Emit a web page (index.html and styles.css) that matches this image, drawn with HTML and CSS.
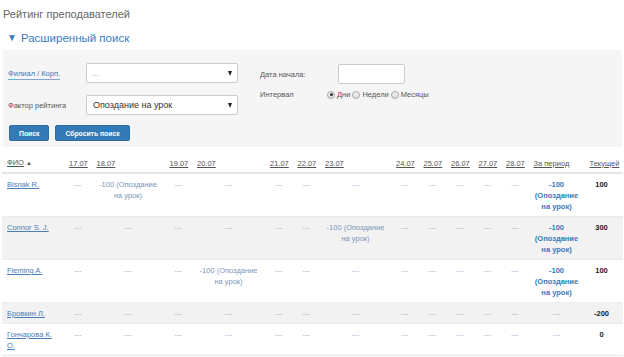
FILE: index.html
```html
<!DOCTYPE html>
<html lang="ru">
<head>
    <meta charset="UTF-8">
    <title>Рейтинг преподавателей</title>
    <link rel="stylesheet" href="styles.css">
</head>
<body>
    <div class="page">
        <h1 class="page-title">Рейтинг преподавателей</h1>
        <div class="search-toggle"><span class="caret">▼</span>Расширенный поиск</div>

        <div class="search-panel">
            <div class="search-fields">
                <div class="field-col">
                    <div class="field-row">
                        <span class="field-label"><a class="link-label">Филиал / Корп.</a></span>
                        <div class="fake-select"><span class="placeholder">...</span><span class="arrow"></span></div>
                    </div>
                    <div class="field-row">
                        <span class="field-label">Фактор рейтинга</span>
                        <div class="fake-select"><span class="value">Опоздание на урок</span><span class="arrow"></span></div>
                    </div>
                </div>
                <div class="field-col right">
                    <div class="field-row date-row">
                        <span class="field-label">Дата начала:</span>
                        <div class="date-input"></div>
                    </div>
                    <div class="field-row interval-row">
                        <span class="field-label">Интервал</span>
                        <label class="radio"><span class="radio-dot checked"></span>Дни</label>
                        <label class="radio"><span class="radio-dot"></span>Недели</label>
                        <label class="radio"><span class="radio-dot"></span>Месяцы</label>
                    </div>
                </div>
            </div>
            <div class="buttons">
                <button class="btn">Поиск</button>
                <button class="btn">Сбросить поиск</button>
            </div>
        </div>

        <table class="rating">
            <colgroup>
                <col class="c-name">
                <col class="c-day"><col class="c-wide"><col class="c-day"><col class="c-wide">
                <col class="c-day"><col class="c-day"><col class="c-wide2">
                <col class="c-day"><col class="c-day"><col class="c-day"><col class="c-day"><col class="c-day">
                <col class="c-period"><col class="c-current">
            </colgroup>
            <thead>
                <tr>
                    <th><a>ФИО</a> <span class="sort">▲</span></th>
                    <th><a>17.07</a></th>
                    <th><a>18.07</a></th>
                    <th><a>19.07</a></th>
                    <th><a>20.07</a></th>
                    <th><a>21.07</a></th>
                    <th><a>22.07</a></th>
                    <th><a>23.07</a></th>
                    <th><a>24.07</a></th>
                    <th><a>25.07</a></th>
                    <th><a>26.07</a></th>
                    <th><a>27.07</a></th>
                    <th><a>28.07</a></th>
                    <th><a>За период</a></th>
                    <th><a>Текущей</a></th>
                </tr>
            </thead>
            <tbody id="rows"></tbody>
        </table>
    </div>

    <script>
        const teachers = [
            { name: 'Bisnak R.', late: 1, total: '100', hasPeriod: true },
            { name: 'Connor S. J.', late: 6, total: '300', hasPeriod: true },
            { name: 'Fleming A.', late: 3, total: '100', hasPeriod: true },
            { name: 'Бровкин Л.', late: -1, total: '-200', hasPeriod: false },
            { name: 'Гончарова К. О.', late: -1, total: '0', hasPeriod: false }
        ];

        const tbody = document.getElementById('rows');

        teachers.forEach(t => {
            let html = '<td class="name"><a>' + t.name + '</a></td>';
            for (let i = 0; i < 12; i++) {
                if (i === t.late) {
                    html += '<td class="day"><a class="score">-100 (Опоздание на урок)</a></td>';
                } else {
                    html += '<td class="day"><a class="empty">---</a></td>';
                }
            }
            if (t.hasPeriod) {
                html += '<td class="period"><a>-100 (Опоздание на урок)</a></td>';
            } else {
                html += '<td class="period"><a class="empty">---</a></td>';
            }
            html += '<td class="current">' + t.total + '</td>';

            const tr = document.createElement('tr');
            tr.innerHTML = html;
            tbody.appendChild(tr);
        });
    </script>
</body>
</html>
```

FILE: styles.css
```css
* {
    margin: 0;
    padding: 0;
    box-sizing: border-box;
}

body {
    font-family: "Liberation Sans", Arial, sans-serif;
    background: white;
    color: #555;
}

.page {
    padding: 0 2px 0 3px;
}

.page-title {
    font-size: 11px;
    font-weight: normal;
    color: #666;
    line-height: 14px;
    margin-top: 7px;
}

.search-toggle {
    font-size: 11.5px;
    color: #3a7bbf;
    line-height: 15px;
    margin-top: 9px;
    padding-left: 4px;
}

.caret {
    font-size: 10px;
    margin-right: 4px;
    vertical-align: 1px;
}

.search-panel {
    background: #f5f5f5;
    margin-top: 4px;
    padding: 13px 0 6px 5px;
}

.search-fields {
    display: flex;
}

.field-col {
    display: flex;
    flex-direction: column;
    gap: 12px;
    width: 230px;
}

.field-col.right {
    margin-left: 22px;
    gap: 5px;
    padding-top: 1px;
}

.field-row {
    display: flex;
    align-items: center;
    height: 20px;
    font-size: 7.5px;
}

.field-label {
    width: 78px;
    flex-shrink: 0;
    color: #555;
}

.link-label {
    color: #337ab7;
    border-bottom: 1px solid #7da6d0;
    padding-bottom: 1px;
}

.fake-select {
    width: 152px;
    height: 20px;
    background: white;
    border: 1px solid #ccc;
    border-radius: 2px;
    display: flex;
    align-items: center;
    justify-content: space-between;
    padding: 0 5px;
}

.fake-select .placeholder {
    color: #999;
    font-size: 8px;
}

.fake-select .value {
    color: #333;
    font-size: 9px;
    padding-left: 1px;
}

.arrow {
    width: 0;
    height: 0;
    border-left: 2.5px solid transparent;
    border-right: 2.5px solid transparent;
    border-top: 5px solid #222;
}

.date-input {
    width: 67px;
    height: 20px;
    background: white;
    border: 1px solid #ccc;
    border-radius: 2px;
}

.interval-row {
    height: 11px;
}

.interval-row .field-label {
    width: 67px;
}

.radio {
    display: flex;
    align-items: center;
    color: #555;
    margin-right: 2px;
}

.radio-dot {
    width: 8px;
    height: 8px;
    border-radius: 50%;
    border: 1px solid #a8a8a8;
    background: linear-gradient(#f4f4f4, #dcdcdc);
    margin-right: 2px;
    position: relative;
}

.radio-dot.checked::after {
    content: "";
    position: absolute;
    left: 1.5px;
    top: 1.5px;
    width: 3px;
    height: 3px;
    border-radius: 50%;
    background: #333;
}

.buttons {
    display: flex;
    gap: 6px;
    margin-top: 10px;
    margin-left: 1px;
}

.btn {
    height: 16px;
    background: #337ab7;
    color: white;
    border: 1px solid #2e6da4;
    border-radius: 2px;
    font-family: inherit;
    font-size: 6.8px;
    font-weight: bold;
    padding: 0 9px;
}

.rating {
    width: 620px;
    margin-left: -1px;
    margin-top: 5px;
    border-collapse: collapse;
    table-layout: fixed;
    font-size: 7.5px;
    line-height: 11px;
}

.c-name { width: 62px; }
.c-day { width: 27.5px; }
.c-wide { width: 73px; }
.c-wide2 { width: 71px; }
.c-period { width: 56px; }
.c-current { width: 38px; }

.rating th {
    text-align: left;
    font-weight: normal;
    padding: 5px 5px 3px;
    border-bottom: 2px solid #e6e6e6;
    white-space: nowrap;
}

.rating th a {
    color: #555;
    text-decoration: underline;
}

.sort {
    font-size: 6px;
}

.rating td {
    padding: 5px 5px 4px;
    border-top: 1px solid #ececec;
    vertical-align: top;
}

.rating tbody tr:nth-child(even) td {
    background: #f2f2f2;
}

.rating tbody tr:last-child td {
    border-bottom: 1px solid #e6e6e6;
}

.rating td.name a {
    color: #4a7db4;
    text-decoration: underline;
}

.rating td.day,
.rating td.period {
    text-align: center;
}

.empty {
    color: #9fb5cd;
}

.score {
    color: #7b97b8;
}

.rating td.period a {
    color: #3a79b8;
    font-weight: bold;
}

.rating td.period a.empty {
    color: #9fb5cd;
    font-weight: normal;
}

.rating td.current {
    text-align: center;
    padding-right: 9px;
    font-weight: bold;
    color: #222;
}
```
